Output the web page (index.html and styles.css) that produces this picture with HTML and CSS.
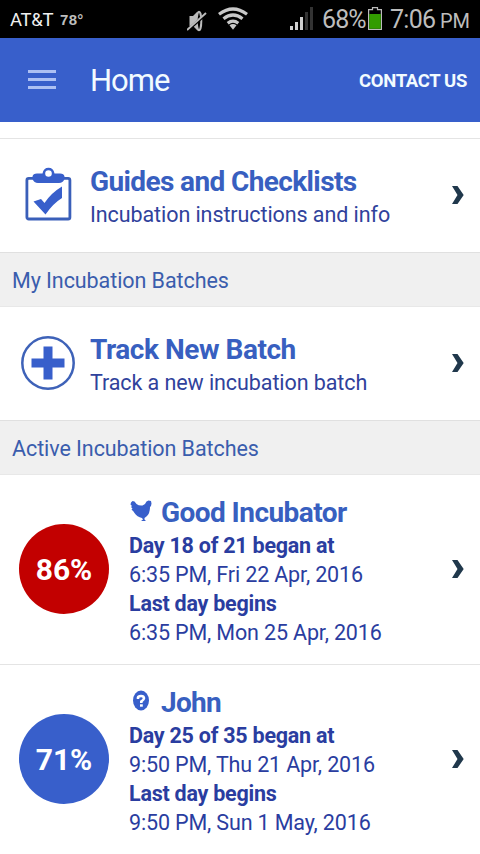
FILE: index.html
```html
<!DOCTYPE html>
<html lang="en">
<head>
<meta charset="utf-8">
<title>Home</title>
<link rel="stylesheet" href="styles.css">
</head>
<body>
<div class="status">
  <span class="carrier">AT&amp;T</span><span class="temp">78°</span>
  <svg class="mute" width="22" height="24" viewBox="0 0 22 24"><path d="M2.500 7H6l4-4v18l-4-4H2.500z" fill="#bbb"/><ellipse cx="12" cy="12" rx="2.300" ry="9.300" fill="none" stroke="#bbb" stroke-width="2"/><path d="M0 22 19 5" stroke="#000" stroke-width="3"/><path d="M0 21 19 4" stroke="#bbb" stroke-width="1.900"/></svg>
  <svg class="wifi" width="32" height="24" viewBox="0 0 32 24"><g fill="none" stroke="#c8c8c8" stroke-width="3.200"><path d="M2 7.300Q16-3.300 30 7.300"/><path d="M6.500 11.800Q16 4.200 25.500 11.800"/><path d="M10.700 16.200Q16 12 21.300 16.200"/></g><path d="M12.500 18.200Q16 16 19.500 18.200L16 22.700z" fill="#c8c8c8"/></svg>
  <svg class="signal" width="24" height="24" viewBox="0 0 24 24"><path d="M0 19h3v4H0zM5 15h3v8H5zM10 10h3v13h-3z" fill="#d0d0d0"/><path d="M15 5h3v18h-3zM20 0h3v23h-3z" fill="#333"/></svg>
  <span class="percent">68%</span>
  <svg class="battery" width="14" height="23" viewBox="0 0 14 23"><path d="M.600 2.600h3.900v-2h5v2h3.900v19.800H.600z" fill="#000" stroke="#bbb" stroke-width="1.200"/><path d="M1.200 7h11.600v14.800H1.200z" fill="#329c00"/></svg>
  <span class="clock">7:06</span><span class="ampm">PM</span>
</div>
<header class="bar">
  <div class="burger"><i></i><i></i><i></i></div>
  <h1>Home</h1>
  <a class="contact">CONTACT US</a>
</header>
<main>
  <div class="spacer"></div>
  <div class="row">
    <div class="icon clipboard"><svg width="48" height="54" viewBox="0 0 48 54"><rect x="2.900" y="11.400" width="43" height="40.600" rx="1.800" fill="#fff" stroke="#3a5fb9" stroke-width="2.800"/><path fill="#385fcb" fill-rule="evenodd" d="M8.500 12V9.500Q9 6.500 13 6.500H18.500q1-5.800 6-5.800t6 5.800H36q4 0 4.500 3V12Q39 16 35 16H14Q10 16 8.500 12zM24.500 3.200a3.300 3.300 0 1 0 0 6.600 3.300 3.300 0 0 0 0-6.600z"/><path fill="#385fcb" d="M9.500 34.500 17 32 20.500 36Q27 26 38 19.500V31Q29 36.500 21.500 47.500z"/></svg></div>
    <div class="text"><h2 class="guides">Guides and Checklists</h2><p>Incubation instructions and info</p></div>
    <svg class="chevron" width="13" height="19" viewBox="0 0 13 19"><path d="M0 0h5.500l6.200 9-6.200 9H0l5.500-9z"/></svg>
  </div>
  <div class="section">My Incubation Batches</div>
  <div class="row">
    <div class="icon plus"><svg width="54" height="54" viewBox="0 0 54 54"><circle cx="27" cy="27" r="25.700" fill="none" stroke="#3e62b8" stroke-width="2.500"/><path d="M22.500 10.500h9v12h12v9h-12v12h-9v-12h-12v-9h12z" fill="#385fcb"/></svg></div>
    <div class="text"><h2>Track New Batch</h2><p>Track a new incubation batch</p></div>
    <svg class="chevron" width="13" height="19" viewBox="0 0 13 19"><path d="M0 0h5.500l6.200 9-6.200 9H0l5.500-9z"/></svg>
  </div>
  <div class="section">Active Incubation Batches</div>
  <div class="batch">
    <div class="disc red">86%</div>
    <div class="info">
      <h3><svg width="24" height="22" viewBox="0 0 24 22"><path fill="#385fcb" d="M2 2.500 3.500 1 5.500 1.500 7.500 4Q10 6 13.500 5.500L16 4 17.500 1.500 19.500.500 22 1 22.500 3.500 22 6 21 7Q21 13 18 16L15.500 18V19.500L17 21H12L14 19.500 13 18Q8 17 5.500 13L4.500 11.500 2.500 9.500 3.500 8.500 2 7 3 6 1.500 4.500z"/></svg>Good Incubator</h3>
      <b>Day 18 of 21 began at</b><p>6:35 PM, Fri 22 Apr, 2016</p>
      <b>Last day begins</b><p>6:35 PM, Mon 25 Apr, 2016</p>
    </div>
    <svg class="chevron" width="13" height="19" viewBox="0 0 13 19"><path d="M0 0h5.500l6.200 9-6.200 9H0l5.500-9z"/></svg>
  </div>
  <div class="batch last">
    <div class="disc">71%</div>
    <div class="info">
      <h3><svg width="24" height="22" viewBox="0 0 24 22"><ellipse cx="12" cy="10.500" rx="8" ry="10" fill="#385fcb"/><path d="M9 9V7.500Q9.200 6 12 6t3 2.200Q15 9.500 12.300 11.500V13" fill="none" stroke="#fff" stroke-width="2.600"/><path d="M11 14.300h2.800v2.400H11z" fill="#fff"/></svg>John</h3>
      <b>Day 25 of 35 began at</b><p>9:50 PM, Thu 21 Apr, 2016</p>
      <b>Last day begins</b><p>9:50 PM, Sun 1 May, 2016</p>
    </div>
    <svg class="chevron" width="13" height="19" viewBox="0 0 13 19"><path d="M0 0h5.500l6.200 9-6.200 9H0l5.500-9z"/></svg>
  </div>
</main>
</body>
</html>
```
FILE: styles.css
```css
* { box-sizing: border-box; }
body { margin: 0; width: 480px; height: 854px; overflow: hidden; background: #fff; font-family: Roboto, "Liberation Sans", sans-serif; }
h1, h2, h3, p { margin: 0; }
svg { display: block; flex: none; }
span, h1, h2, h3, p, b, .contact, .section { white-space: nowrap; }
.status { height: 38px; background: #000; color: #bdbdbd; display: flex; align-items: center; line-height: 38px; }
.carrier { width: 50px; margin-left: 10px; color: #f0f0f0; font-size: 18.500px; letter-spacing: -.3px; padding-top: 2px; }
.temp { width: 127px; font-family: "Liberation Sans", sans-serif; font-size: 15px; font-weight: bold; letter-spacing: .3px; padding-top: 1px; }
.mute { margin-top: 3px; }
.wifi { margin-left: 8px; margin-bottom: 1px; }
.signal { margin-left: 41px; margin-bottom: 1px; }
.percent { width: 45px; margin-left: 8px; font-size: 25px; letter-spacing: -.9px; padding-top: 2px; }
.battery { margin-left: 1px; margin-bottom: 2px; }
.clock { width: 50px; margin-left: 8px; font-size: 25px; letter-spacing: -.7px; padding-top: 2px; }
.ampm { font-size: 20px; padding-top: 4px; }
.bar { height: 84px; background: #385fcb; color: #f2fbff; display: flex; align-items: center; padding: 0 13px 0 28px; }
.burger { display: grid; gap: 5px; width: 28px; margin-bottom: 1px; }
.burger i { height: 3px; background: #adc0f3; }
h1 { margin-left: 34px; font-size: 31px; font-weight: 400; letter-spacing: -1px; padding-top: 1px; }
.contact { margin-left: auto; font-size: 18.500px; font-weight: 700; letter-spacing: -.35px; padding-top: 2px; }
.spacer { height: 17px; border-bottom: 1px solid #e4e4e4; }
.row { height: 113px; display: flex; align-items: center; padding-right: 15px; }
.icon { width: 90px; flex: none; display: flex; justify-content: center; padding: 0 6px 2px 12px; }
.clipboard { padding-bottom: 4px; }
.text { flex: 1; padding-top: 3px; }
h2 { font-size: 28px; line-height: 35px; font-weight: 700; letter-spacing: -.46px; color: #385fc0; }
.guides { letter-spacing: -.62px; }
.text p { font-size: 21.500px; line-height: 31px; letter-spacing: -.08px; color: #30429c; }
.chevron { fill: #20384c; }
.section { height: 55px; background: #f0f0f0; border-top: 1px solid #e0e0e0; border-bottom: 1px solid #e8e8e8; color: #3a5dad; font-size: 21.500px; letter-spacing: -.07px; line-height: 56px; padding-left: 12px; }
.batch { height: 190px; display: flex; align-items: center; padding: 0 15px 1px 19px; border-bottom: 1px solid #e4e4e4; }
.batch.last { border: 0; padding-bottom: 2px; }
.disc { width: 90px; height: 90px; border-radius: 50%; background: #385fcb; color: #fff; font-size: 30px; font-weight: 700; display: flex; justify-content: center; align-items: center; flex: none; padding-top: 1px; }
.disc.red { background: #c20000; }
.info { margin-left: 20px; flex: 1; padding-top: 4px; }
h3 { display: flex; align-items: center; gap: 8px; font-size: 28px; line-height: 36px; letter-spacing: -.56px; color: #385fc0; }
h3 svg { margin-top: -4px; }
.last h3 { letter-spacing: -.75px; }
.info b, .info p { display: block; font-size: 21.500px; line-height: 29px; color: #2a3da0; }
.info b { letter-spacing: -.24px; }
.info p { letter-spacing: -.15px; }
```
